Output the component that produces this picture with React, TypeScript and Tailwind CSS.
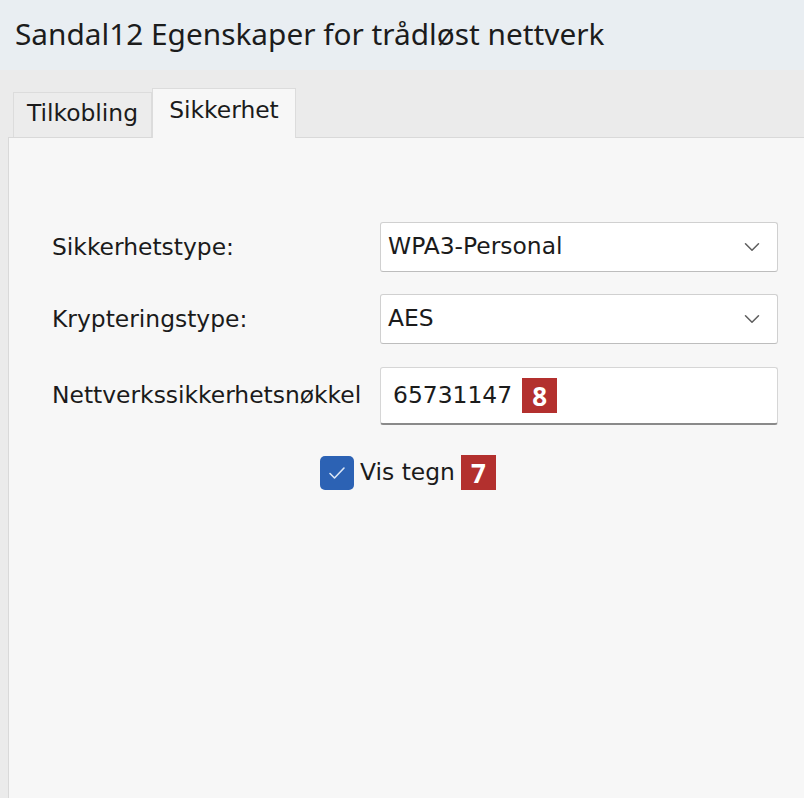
import { ChevronDown } from 'lucide-react';

const font = { fontFamily: '"DejaVu Sans", "Noto Sans", sans-serif' };

function Select({ value }: { value: string }) {
  return (
    <div className="flex h-[50px] w-[398px] items-center justify-between rounded-[3px] border border-[#d0d0d0] border-b-[#bdbdbd] bg-white pl-[7px] pr-[12px] text-[23.4px] text-[#1b1b1b]">
      <span>{value}</span>
      <ChevronDown className="h-[26px] w-[26px] text-[#5f5f5f]" strokeWidth={1.4} />
    </div>
  );
}

function Badge({ n }: { n: string }) {
  return (
    <span className="flex h-[35px] w-[35px] items-center justify-center bg-[#b3302e] font-['Noto_Sans',sans-serif] text-[26px] font-bold leading-none text-white">
      {n}
    </span>
  );
}

export default function App() {
  return (
    <div className="flex h-[798px] w-[804px] flex-col overflow-hidden bg-[#ebebeb]" style={font}>
      {/* Title bar */}
      <div className="flex h-[70px] items-center bg-[#e9eef2] pl-[15px] pb-[2px] font-['Noto_Sans',sans-serif] text-[29.8px] text-[#1c1c1c]">
        Sandal12 Egenskaper for trådløst nettverk
      </div>

      {/* Tabs */}
      <div className="flex items-end pl-[13px] pt-[18px]">
        <div className="flex h-[45px] w-[139px] items-center justify-center border border-b-0 border-[#dcdcdc] bg-[#ececec] pb-[2px] text-[23.4px] text-[#1b1b1b]">
          Tilkobling
        </div>
        <div className="-mb-px z-10 flex h-[50px] w-[144px] items-start justify-center border border-b-0 border-[#dcdcdc] bg-[#f7f7f7] pt-[4px] text-[23.4px] text-[#1b1b1b]">
          Sikkerhet
        </div>
      </div>

      {/* Panel */}
      <div className="ml-[8px] flex flex-1 flex-col border-l border-t border-[#d9d9d9] bg-[#f7f7f7] pl-[43px] pt-[84px]">
        <div className="flex items-center">
          <span className="w-[328px] pt-[2px] text-[23.4px] text-[#1b1b1b]">Sikkerhetstype:</span>
          <Select value="WPA3-Personal" />
        </div>
        <div className="mt-[22px] flex items-center">
          <span className="w-[328px] pt-[2px] text-[23.4px] text-[#1b1b1b]">Krypteringstype:</span>
          <Select value="AES" />
        </div>
        <div className="mt-[23px] flex items-center">
          <span className="w-[328px] text-[23.4px] text-[#1b1b1b]">Nettverkssikkerhetsnøkkel</span>
          <div className="flex h-[58px] w-[398px] items-center gap-[10px] rounded-[3px] border border-[#d6d6d6] border-b-2 border-b-[#8a8a8a] bg-white pl-[12px] text-[23.4px] text-[#1b1b1b]">
            <span>65731147</span>
            <Badge n="8" />
          </div>
        </div>

        <div className="mt-[30px] flex items-center justify-center gap-[6px] pr-[40px]">
          <span className="flex h-[34px] w-[34px] items-center justify-center rounded-[5px] bg-[#2c62b4]">
            <svg width="18" height="14" viewBox="0 0 18 14" fill="none">
              <path d="M2 7.5 L6.5 12 L16 2" stroke="#dbe6f6" strokeWidth="1.6" strokeLinecap="round" strokeLinejoin="round" />
            </svg>
          </span>
          <span className="text-[23.4px] text-[#1b1b1b]">Vis tegn</span>
          <Badge n="7" />
        </div>
      </div>
    </div>
  );
}
